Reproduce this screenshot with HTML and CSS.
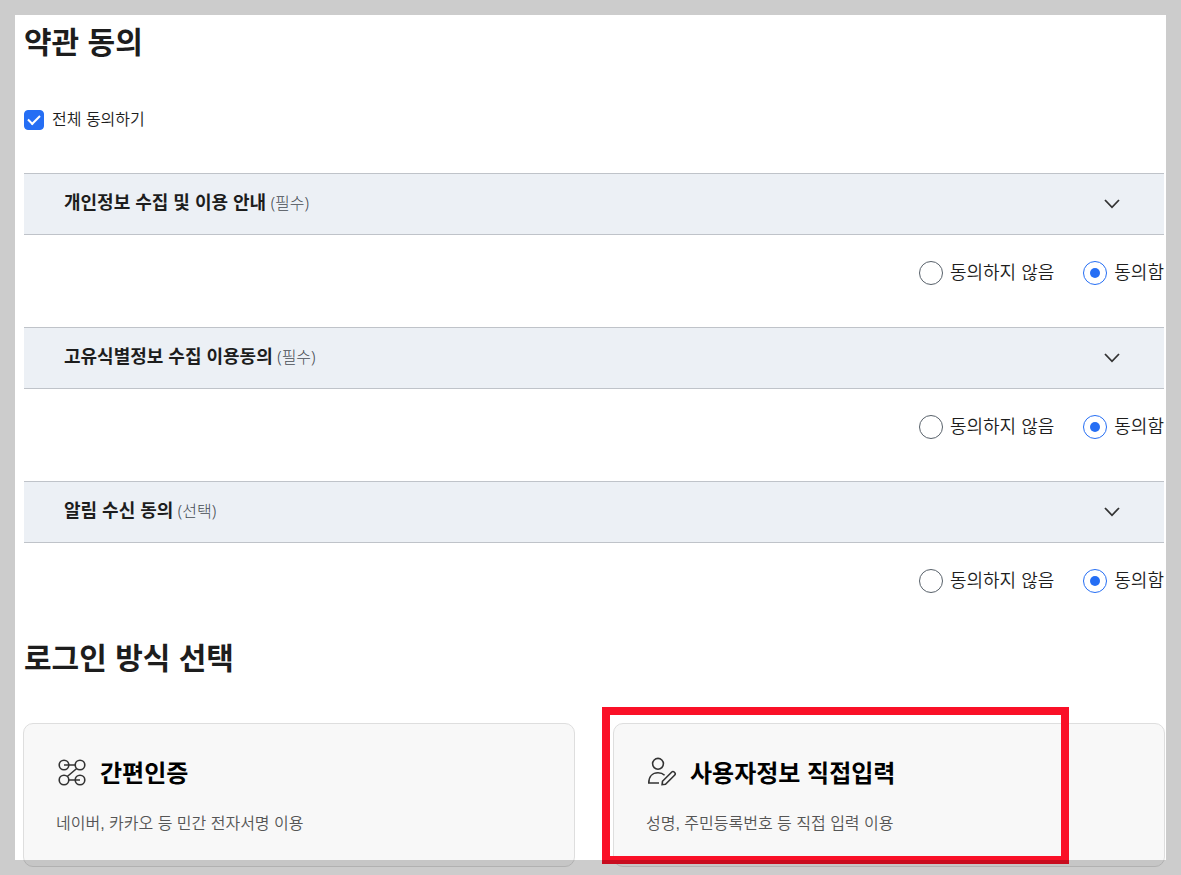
FILE: index.html
```html
<!DOCTYPE html>
<html lang="ko">
<head>
<meta charset="utf-8">
<meta name="viewport" content="width=device-width, initial-scale=1">
<title>약관 동의</title>
<link rel="stylesheet" href="styles.css">
</head>
<body>
<main class="page">
  <h1 class="title">약관 동의</h1>
  <label class="agree-all"><input class="check" type="checkbox" checked><span>전체 동의하기</span></label>

  <section class="term">
    <button class="term-head" type="button">
      <span><strong class="term-name">개인정보 수집 및 이용 안내</strong> <span class="term-kind">(필수)</span></span>
      <svg class="chevron" viewBox="0 0 16 10" aria-hidden="true"><path d="M1 1l7 7.3L15 1"/></svg>
    </button>
    <div class="choices">
      <label class="choice"><input class="radio" type="radio" name="privacy"><span>동의하지 않음</span></label>
      <label class="choice"><input class="radio" type="radio" name="privacy" checked><span>동의함</span></label>
    </div>
  </section>

  <section class="term">
    <button class="term-head" type="button">
      <span><strong class="term-name">고유식별정보 수집 이용동의</strong> <span class="term-kind">(필수)</span></span>
      <svg class="chevron" viewBox="0 0 16 10" aria-hidden="true"><path d="M1 1l7 7.3L15 1"/></svg>
    </button>
    <div class="choices">
      <label class="choice"><input class="radio" type="radio" name="identity"><span>동의하지 않음</span></label>
      <label class="choice"><input class="radio" type="radio" name="identity" checked><span>동의함</span></label>
    </div>
  </section>

  <section class="term">
    <button class="term-head" type="button">
      <span><strong class="term-name">알림 수신 동의</strong> <span class="term-kind">(선택)</span></span>
      <svg class="chevron" viewBox="0 0 16 10" aria-hidden="true"><path d="M1 1l7 7.3L15 1"/></svg>
    </button>
    <div class="choices">
      <label class="choice"><input class="radio" type="radio" name="notice"><span>동의하지 않음</span></label>
      <label class="choice"><input class="radio" type="radio" name="notice" checked><span>동의함</span></label>
    </div>
  </section>

  <h2 class="title">로그인 방식 선택</h2>
  <div class="methods">
    <button class="card" type="button">
      <span class="card-head">
        <svg class="card-icon" viewBox="0 0 32 32" aria-hidden="true">
          <circle cx="8" cy="9" r="4.8"/><circle cx="24" cy="9" r="4.8"/><circle cx="8" cy="24" r="4.8"/><circle cx="24" cy="24" r="4.8"/>
          <path d="M8 9h11.2M20.7 12.5L11.3 20.5M12.8 24H24"/>
        </svg>
        <span class="card-name">간편인증</span>
      </span>
      <span class="card-text">네이버, 카카오 등 민간 전자서명 이용</span>
    </button>
    <div class="marked">
      <button class="card" type="button">
        <span class="card-head">
          <svg class="card-icon" viewBox="0 0 32 32" aria-hidden="true">
            <circle cx="12" cy="7.8" r="5.4"/>
            <path d="M13 27H2.8c0-6.5 3.8-10.2 9.2-10.2 2.8 0 5 .9 6.6 2.5"/>
            <path d="M16.5 25.300l9.300-9.300a1.600 1.600 0 0 1 2.300 0l.7.700a1.600 1.600 0 0 1 0 2.300l-9.300 9.300-3.400.400z"/>
          </svg>
          <span class="card-name">사용자정보 직접입력</span>
        </span>
        <span class="card-text">성명, 주민등록번호 등 직접 입력 이용</span>
      </button>
      <span class="marker"></span>
    </div>
  </div>
</main>
</body>
</html>
```
FILE: styles.css
```css
*,
*::before {
  box-sizing: border-box;
}

body {
  margin: 0;
  background: #fff;
  color: #1d1d1d;
  font-family: "Liberation Sans", "Noto Sans CJK KR", sans-serif;
  font-size: 16px;
  font-weight: 350;
  line-height: 24px;
}

/* Translucent frame around the window */
body::after {
  content: "";
  position: fixed;
  inset: 0;
  border: 15px solid rgba(0, 0, 0, 0.2);
  pointer-events: none;
}

button {
  font: inherit;
  color: inherit;
  text-align: left;
  cursor: pointer;
}

.page {
  padding: 19px 17px 8px 24px;
}

.title {
  margin: 0;
  font-size: 30px;
  font-weight: 700;
  line-height: 48px;
}

.agree-all {
  display: flex;
  align-items: center;
  gap: 8px;
  margin: 41px 0;
}

.check {
  appearance: none;
  display: grid;
  place-items: center;
  width: 20px;
  height: 20px;
  margin: 0;
  border: 1px solid #58616a;
  border-radius: 4px;
}

.check:checked {
  border-color: #256ef4;
  background: #256ef4;
}

.check:checked::before {
  content: "";
  width: 12px;
  height: 7px;
  border: solid #fff;
  border-width: 0 0 2px 2px;
  transform: translateY(-2px) rotate(-45deg);
}

.term {
  margin-bottom: 42px;
}

.term-head {
  display: flex;
  align-items: center;
  justify-content: space-between;
  width: 100%;
  height: 62px;
  padding: 0 44px 2px 40px;
  border: solid #bfc3c9;
  border-width: 1px 0;
  background: #ecf0f5;
}

.term-name {
  font-size: 18px;
  font-weight: 700;
}

.term-kind {
  color: #464c53;
  font-family: "Noto Sans", "Noto Sans CJK KR", sans-serif;
  font-weight: 300;
}

.chevron {
  width: 16px;
  height: 10px;
  margin-top: 2px;
  fill: none;
  stroke: #333;
  stroke-width: 1.8;
}

.choices {
  display: flex;
  justify-content: flex-end;
  gap: 29px;
  margin-top: 26px;
}

.choice {
  display: flex;
  align-items: center;
  gap: 7px;
  font-size: 18px;
}

.radio {
  appearance: none;
  display: grid;
  place-items: center;
  width: 24px;
  height: 24px;
  margin: 0;
  border: 1px solid #58616a;
  border-radius: 50%;
  background: #fff;
}

.radio:checked {
  border-color: #256ef4;
}

.radio:checked::before {
  content: "";
  width: 10px;
  height: 10px;
  border-radius: 50%;
  background: #256ef4;
}

.methods {
  display: grid;
  grid-template-columns: 1fr 1fr;
  gap: 38px;
  margin: 40px -1px 0;
}

.marked {
  position: relative;
}

.card {
  display: flex;
  flex-direction: column;
  gap: 20px;
  width: 100%;
  height: 144px;
  padding: 32px;
  border: 1px solid #dedede;
  border-radius: 10px;
  background: #f8f8f8;
}

.card-head {
  display: flex;
  align-items: flex-start;
  gap: 12px;
}

.card-icon {
  width: 32px;
  height: 32px;
  fill: none;
  stroke: #333;
  stroke-width: 1.6;
}

.card-name {
  color: #000;
  font-size: 24px;
  font-weight: 700;
  line-height: 36px;
}

.card-text {
  color: #555;
}

.marker {
  position: absolute;
  top: -16px;
  right: 96px;
  bottom: 3px;
  left: -11px;
  border: 8px solid #fa1027;
  pointer-events: none;
}
```
